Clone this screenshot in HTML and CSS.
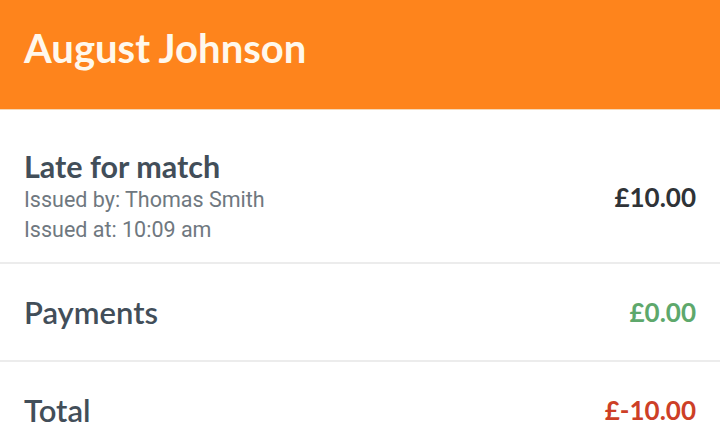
FILE: index.html
```html
<!DOCTYPE html>
<html lang="en">
<head>
  <meta charset="UTF-8">
  <title>Fine details</title>
  <link rel="stylesheet" href="styles.css">
</head>
<body>
  <div class="header">
    <h1>August Johnson</h1>
  </div>
  <div class="list">
    <div class="row fine">
      <div class="info">
        <h2>Late for match</h2>
        <p>Issued by: Thomas Smith</p>
        <p>Issued at: 10:09 am</p>
      </div>
      <div class="amount">£10.00</div>
    </div>
    <div class="row payments">
      <h2>Payments</h2>
      <div class="amount green">£0.00</div>
    </div>
    <div class="row total">
      <h2>Total</h2>
      <div class="amount red">£-10.00</div>
    </div>
  </div>
</body>
</html>
```
FILE: styles.css
```css
body {
  margin: 0;
  font-family: Lato, "Liberation Sans", sans-serif;
  background: #fff;
  color: #424e59;
}
.header {
  background: #fe841c;
  height: 110px;
  padding: 0 24px;
  display: flex;
  align-items: center;
  border-bottom: 1px solid #f6d7b5;
  box-sizing: border-box;
}
.header h1 {
  margin: 0 0 14px;
  color: #fff8ec;
  font-size: 40px;
  font-weight: 700;
}
.row {
  display: flex;
  align-items: center;
  justify-content: space-between;
  padding: 0 24px;
  border-bottom: 2px solid #ececec;
}
.row h2 {
  margin: 0;
  font-size: 31px;
  font-weight: 600;
}
.fine {
  padding-top: 39px;
  padding-bottom: 17px;
}
.fine p {
  margin: 0;
  font-family: Roboto, sans-serif;
  font-size: 21.5px;
  line-height: 30px;
  color: #6f7880;
}
.fine h2 {
  font-size: 30.5px;
  font-weight: 700;
  line-height: 34px;
  margin-bottom: 2px;
}
.payments {
  height: 96px;
}
.total {
  height: 96px;
  border-bottom: none;
}
.amount {
  font-size: 26px;
  font-weight: 700;
  color: #2f3337;
}
.green {
  color: #5ea86c;
}
.red {
  color: #cd3f27;
}
```
